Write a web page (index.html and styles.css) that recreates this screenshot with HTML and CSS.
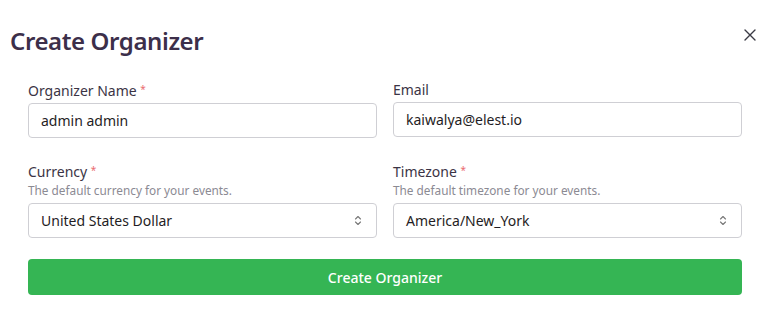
FILE: index.html
```html
<!DOCTYPE html>
<html lang="en">
<head>
    <meta charset="UTF-8">
    <title>Create Organizer</title>
    <link rel="stylesheet" href="styles.css">
</head>
<body>
    <div class="modal">
        <div class="modal-header">
            <h2 class="modal-title">Create Organizer</h2>
            <button class="close-btn" aria-label="Close">
                <svg width="12" height="12" viewBox="0 0 12 12"><path d="M1 1 L11 11 M11 1 L1 11" stroke="#3a3a44" stroke-width="1.4" stroke-linecap="round"/></svg>
            </button>
        </div>

        <form class="form">
            <div class="field">
                <label class="label">Organizer Name <span class="req">*</span></label>
                <div class="input">admin admin</div>
            </div>
            <div class="field">
                <label class="label">Email</label>
                <div class="input">kaiwalya@elest.io</div>
            </div>
            <div class="field">
                <label class="label">Currency <span class="req">*</span></label>
                <div class="hint">The default currency for your events.</div>
                <div class="input select">
                    <span>United States Dollar</span>
                    <svg class="chevron" width="8" height="11" viewBox="0 0 8 11"><path d="M1.5 4 L4 1.5 L6.5 4 M1.5 7 L4 9.5 L6.5 7" fill="none" stroke="#777" stroke-width="1.1" stroke-linecap="round" stroke-linejoin="round"/></svg>
                </div>
            </div>
            <div class="field">
                <label class="label">Timezone <span class="req">*</span></label>
                <div class="hint">The default timezone for your events.</div>
                <div class="input select">
                    <span>America/New_York</span>
                    <svg class="chevron" width="8" height="11" viewBox="0 0 8 11"><path d="M1.5 4 L4 1.5 L6.5 4 M1.5 7 L4 9.5 L6.5 7" fill="none" stroke="#777" stroke-width="1.1" stroke-linecap="round" stroke-linejoin="round"/></svg>
                </div>
            </div>
            <button type="button" class="submit">Create Organizer</button>
        </form>
    </div>
</body>
</html>
```
FILE: styles.css
```css
body {
    margin: 0;
    font-family: 'Noto Sans', 'Open Sans', sans-serif;
    background-color: #fff;
    color: #2e2b35;
}
.modal {
    width: 773px;
    height: 321px;
    box-sizing: border-box;
    padding: 22px 0 0 0;
}
.modal-header {
    display: flex;
    justify-content: space-between;
    align-items: center;
    padding: 0 16px 0 10px;
    height: 36px;
}
.modal-title {
    margin: 0;
    font-size: 24px;
    font-weight: 600;
    color: #3c2f4a;
    letter-spacing: -0.4px;
}
.close-btn {
    border: none;
    background: none;
    padding: 0;
    width: 14px;
    height: 14px;
    display: flex;
    align-items: center;
    justify-content: center;
    margin-top: -10px;
}
.form {
    display: grid;
    grid-template-columns: 349px 349px;
    column-gap: 16px;
    row-gap: 23px;
    padding: 22px 31px 0 28px;
}
.field {
    display: flex;
    flex-direction: column;
}
.label {
    font-size: 14px;
    line-height: 19px;
    color: #3b3445;
    margin-bottom: 3px;
}
.req {
    color: #ea6b70;
    font-size: 10px;
    vertical-align: 3px;
}
.hint {
    font-size: 11.8px;
    line-height: 16px;
    color: #8b8a93;
    margin-top: -2px;
    margin-bottom: 5px;
}
.input {
    height: 35px;
    box-sizing: border-box;
    border: 1px solid #cfcfd4;
    border-radius: 4px;
    padding: 0 12px;
    display: flex;
    align-items: center;
    font-size: 14px;
    color: #1f1d24;
}
.select {
    justify-content: space-between;
    padding-right: 14px;
}
.submit {
    grid-column: 1 / 3;
    height: 36px;
    margin-top: -2px;
    border: none;
    border-radius: 4px;
    background-color: #35b554;
    color: #fff;
    font-family: inherit;
    font-size: 14px;
    font-weight: 500;
}
```
